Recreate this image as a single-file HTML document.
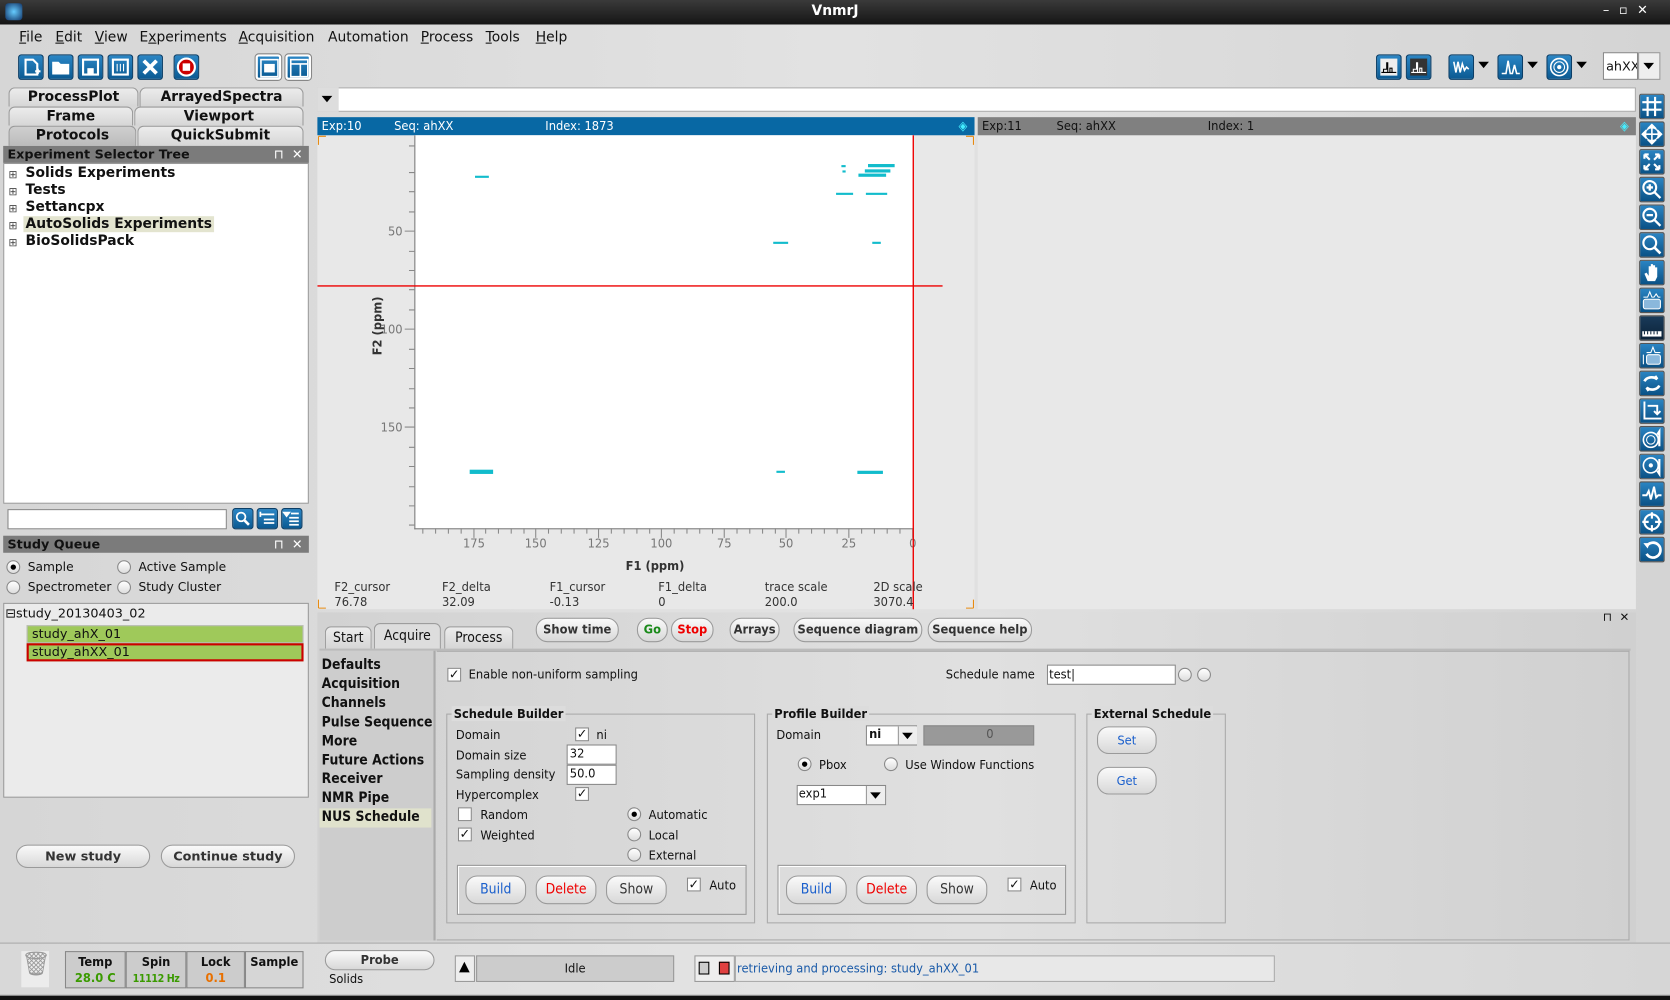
<!DOCTYPE html>
<html><head><meta charset="utf-8">
<style>
*{box-sizing:border-box;margin:0;padding:0}
html,body{width:1670px;height:1000px;overflow:hidden;background:#000}
#w{position:absolute;left:0;top:0;width:1568px;height:939px;transform:scale(1.06505);transform-origin:0 0;background:linear-gradient(90deg,#d6d6d6,#e2e2e2 50%,#d4d4d4);font-family:"DejaVu Sans","Liberation Sans",sans-serif;font-size:12px;color:#111;overflow:hidden}
.a{position:absolute;white-space:nowrap}
.c{font-family:"DejaVu Sans Condensed","DejaVu Sans","Liberation Sans",sans-serif}
.ib{position:absolute;width:24px;height:24px;border-radius:3px;background:linear-gradient(#2b86c5,#0b5a92);border:1px solid #0c3e66}
.ib svg{width:22px;height:22px;display:block}
.rb{position:absolute;width:24px;height:24px;border-radius:2px;background:linear-gradient(#2a84c2,#0a5185);border:1px solid #555}
.rb svg{width:22px;height:22px;display:block}
.tab{position:absolute;border:1px solid #9a9a9a;border-bottom:none;border-radius:6px 6px 0 0;background:linear-gradient(#ececec,#d6d6d6);font-weight:bold;font-size:13px;text-align:center;line-height:17px}
.hdr{position:absolute;background:#7b7b7b;color:#111;font-weight:bold;font-size:12px;padding-left:4px;line-height:16px}
.btn{position:absolute;border:1px solid #9a9a9a;border-radius:11px;background:linear-gradient(#fafafa,#d8d8d8);text-align:center;font-weight:bold;font-size:12px;color:#333;white-space:nowrap}
.rad{position:absolute;width:13px;height:13px;border-radius:50%;border:1px solid #888;background:linear-gradient(#fff,#ddd)}
.rad.on::after{content:"";position:absolute;left:3px;top:3px;width:5px;height:5px;border-radius:50%;background:#000}
.cb{position:absolute;width:13px;height:13px;border:1px solid #888;background:#fff;font-size:12px;line-height:11px;text-align:center;font-weight:bold}
.fld{position:absolute;background:#fff;border:1px solid #888;white-space:nowrap}
</style></head><body><div id="w">
<div class="a" style="left:0;top:0;width:1568px;height:23px;background:linear-gradient(#3a3a3a,#151515)"></div>
<div class="a" style="left:5px;top:3px;width:16px;height:16px;border-radius:3px;background:radial-gradient(#6cf,#136)"></div>
<div class="a" style="left:0;top:3px;width:1568px;text-align:center;color:#fff;font-weight:bold;font-size:13px">VnmrJ</div>
<div class="a" style="left:1505px;top:2px;color:#fff;font-size:12px;letter-spacing:9px">–▫✕</div>
<div class="a" style="left:18px;top:28px;font-size:13px">
<span class="a" style="left:0"><u>F</u>ile</span><span class="a" style="left:34px"><u>E</u>dit</span><span class="a" style="left:71px"><u>V</u>iew</span><span class="a" style="left:113px">E<u>x</u>periments</span><span class="a" style="left:206px"><u>A</u>cquisition</span><span class="a" style="left:290px">Automation</span><span class="a" style="left:377px"><u>P</u>rocess</span><span class="a" style="left:438px"><u>T</u>ools</span><span class="a" style="left:485px"><u>H</u>elp</span></div>
<div class="ib" style="left:17px;top:51px"><svg viewBox="0 0 22 22"><path d="M6 4h7l4 4v10H6z" fill="none" stroke="#fff" stroke-width="2"/><path d="M15 15h5M17.5 12.5v5" stroke="#fff" stroke-width="2"/></svg></div>
<div class="ib" style="left:45px;top:51px"><svg viewBox="0 0 22 22"><path d="M3 6h6l2 2h8v10H3z" fill="#fff"/></svg></div>
<div class="ib" style="left:73px;top:51px"><svg viewBox="0 0 22 22"><rect x="4" y="4" width="14" height="14" fill="none" stroke="#fff" stroke-width="2"/><rect x="8" y="12" width="6" height="6" fill="#fff"/></svg></div>
<div class="ib" style="left:101px;top:51px"><svg viewBox="0 0 22 22"><rect x="4" y="4" width="14" height="14" fill="none" stroke="#fff" stroke-width="2"/><path d="M8 8v7M11 8v7M14 8v7" stroke="#fff"/></svg></div>
<div class="ib" style="left:129px;top:51px"><svg viewBox="0 0 22 22"><path d="M5 5l12 12M17 5L5 17" stroke="#fff" stroke-width="3.5"/></svg></div>
<div class="ib" style="left:163px;top:51px"><svg viewBox="0 0 22 22"><circle cx="11" cy="11" r="8" fill="#c00" stroke="#fff" stroke-width="2"/><rect x="7.5" y="7.5" width="7" height="7" fill="#fff"/></svg></div>
<div class="ib" style="left:240px;top:51px;border:2px solid #fff;outline:1px solid #888"><svg viewBox="0 0 22 22"><rect x="3" y="3" width="16" height="16" fill="none" stroke="#fff" stroke-width="1.5"/><rect x="6" y="7" width="10" height="8" fill="#fff"/></svg></div>
<div class="ib" style="left:268px;top:51px;border:2px solid #fff;outline:1px solid #888"><svg viewBox="0 0 22 22"><rect x="3" y="3" width="16" height="16" fill="none" stroke="#fff" stroke-width="1.5"/><path d="M3 7h16M12 7v12" stroke="#fff" stroke-width="1.5"/></svg></div>
<div class="ib" style="left:1292px;top:51px"><svg viewBox="0 0 22 22"><rect x="3" y="3" width="16" height="16" fill="#eee"/><path d="M4 16h14M6 16v-3h3v-6h1v9M12 16v-4h2v4" stroke="#000" fill="none"/></svg></div>
<div class="ib" style="left:1320px;top:51px"><svg viewBox="0 0 22 22"><rect x="3" y="3" width="16" height="16" fill="#333"/><path d="M4 16h14M6 16v-3h3v-6h1v9M12 16v-4h2v4" stroke="#fff" fill="none"/></svg></div>
<div class="ib" style="left:1360px;top:51px"><svg viewBox="0 0 22 22"><path d="M4 6l2 10 2-10 2 10 2-8 2 6 2-3 2 2" stroke="#fff" stroke-width="1.5" fill="none"/></svg></div>
<div class="a" style="left:1388px;top:58px;border:5px solid transparent;border-top:6px solid #000"></div>
<div class="ib" style="left:1406px;top:51px"><svg viewBox="0 0 22 22"><path d="M3 17h4l2-12 2 12h2l2-8 2 8h3" stroke="#fff" stroke-width="1.5" fill="none"/></svg></div>
<div class="a" style="left:1434px;top:58px;border:5px solid transparent;border-top:6px solid #000"></div>
<div class="ib" style="left:1452px;top:51px"><svg viewBox="0 0 22 22"><circle cx="11" cy="11" r="8" fill="none" stroke="#fff" stroke-width="1.5"/><circle cx="11" cy="11" r="5" fill="none" stroke="#fff"/><circle cx="11" cy="11" r="2" fill="#fff"/></svg></div>
<div class="a" style="left:1480px;top:58px;border:5px solid transparent;border-top:6px solid #000"></div>
<div class="fld" style="left:1505px;top:49px;width:33px;height:26px;font-size:12px;line-height:24px;padding-left:2px;overflow:hidden">ahXX</div>
<div class="a" style="left:1538px;top:49px;width:21px;height:26px;border:1px solid #999;background:#eee"></div>
<div class="a" style="left:1543px;top:59px;border:5px solid transparent;border-top:6px solid #000"></div>
<div class="tab" style="left:8px;top:82px;width:122px;height:18px">ProcessPlot</div>
<div class="tab" style="left:131px;top:82px;width:154px;height:18px">ArrayedSpectra</div>
<div class="tab" style="left:8px;top:100px;width:117px;height:18px">Frame</div>
<div class="tab" style="left:126px;top:100px;width:159px;height:18px">Viewport</div>
<div class="tab" style="left:8px;top:118px;width:120px;height:19px;background:linear-gradient(#cfcfcf,#bbb)">Protocols</div>
<div class="tab" style="left:129px;top:118px;width:156px;height:19px">QuickSubmit</div>
<div class="hdr" style="left:3px;top:137px;width:287px;height:16px">Experiment Selector Tree<span class="a" style="left:254px;color:#fff;font-weight:normal">⊓&nbsp; ✕</span></div>
<div class="a" style="left:3px;top:153px;width:287px;height:320px;background:#fff;border:1px solid #999;font-size:13px;font-weight:bold;line-height:16px;padding:1px 0 0 20px">
<div>Solids Experiments</div><div>Tests</div><div>Settancpx</div><div><span style="background:#e3e4cf;padding:0 2px;margin-left:-2px">AutoSolids Experiments</span></div><div>BioSolidsPack</div></div>
<div class="a" style="left:8px;top:157px;font-size:10px;line-height:16px;color:#444">⊞<br>⊞<br>⊞<br>⊞<br>⊞</div>
<div class="fld" style="left:7px;top:478px;width:206px;height:19px"></div>
<div class="ib" style="left:218px;top:477px;width:20px;height:20px"><svg viewBox="0 0 22 22" style="width:18px;height:18px"><circle cx="9" cy="9" r="5" fill="none" stroke="#fff" stroke-width="2"/><path d="M13 13l5 5" stroke="#fff" stroke-width="3"/></svg></div>
<div class="ib" style="left:241px;top:477px;width:20px;height:20px"><svg viewBox="0 0 22 22" style="width:18px;height:18px"><path d="M3 6h16M3 3v6M7 12h12M7 16h12" stroke="#fff" stroke-width="2"/></svg></div>
<div class="ib" style="left:264px;top:477px;width:20px;height:20px"><svg viewBox="0 0 22 22" style="width:18px;height:18px"><path d="M2 4h6l-3 4zM10 5h9M8 10h11M8 14h11M8 18h11" stroke="#fff" fill="#fff" stroke-width="2"/></svg></div>
<div class="hdr" style="left:3px;top:503px;width:287px;height:16px">Study Queue<span class="a" style="left:254px;color:#fff;font-weight:normal">⊓&nbsp; ✕</span></div>
<div style="font-size:11.5px">
<div class="rad on" style="left:6px;top:526px"></div><div class="a" style="left:26px;top:525px">Sample</div>
<div class="rad" style="left:110px;top:526px"></div><div class="a" style="left:130px;top:525px">Active Sample</div>
<div class="rad" style="left:6px;top:545px"></div><div class="a" style="left:26px;top:544px">Spectrometer</div>
<div class="rad" style="left:110px;top:545px"></div><div class="a" style="left:130px;top:544px">Study Cluster</div>
</div>
<div class="a" style="left:3px;top:566px;width:287px;height:183px;background:#ebebeb;border:1px solid #999"></div>
<div class="a" style="left:5px;top:569px;font-size:12px">⊟study_20130403_02</div>
<div class="a" style="left:25px;top:587px;width:260px;height:17px;background:#9fc95a;border:1px solid #bbb;padding-left:4px;line-height:15px">study_ahX_01</div>
<div class="a" style="left:25px;top:604px;width:260px;height:17px;background:#9fc95a;border:2px solid #c00;padding-left:3px;line-height:13px">study_ahXX_01</div>
<div class="btn" style="left:15px;top:793px;width:126px;height:22px;line-height:20px">New study</div>
<div class="btn" style="left:151px;top:793px;width:126px;height:22px;line-height:20px">Continue study</div>
<div class="a" style="left:298px;top:82px;width:1238px;height:23px;background:#fff;border:1px solid #aaa"></div>
<div class="a" style="left:298px;top:82px;width:20px;height:23px;background:#ddd"></div>
<div class="a" style="left:302px;top:90px;border:5px solid transparent;border-top:6px solid #000"></div>
<div class="a" style="left:298px;top:110px;width:617px;height:462px;background:#e8e8e8"></div>
<div class="a" style="left:918px;top:110px;width:618px;height:462px;background:#e8e8e8"></div>
<div class="a c" style="left:298px;top:110px;width:617px;height:17px;background:#0868a4;color:#fff;line-height:17px;font-size:12px"><span class="a" style="left:4px">Exp:10</span><span class="a" style="left:72px">Seq: ahXX</span><span class="a" style="left:214px">Index: 1873</span><span class="a" style="left:602px;color:#4ef">◈</span></div>
<div class="a c" style="left:918px;top:110px;width:618px;height:17px;background:#808080;color:#111;line-height:17px;font-size:12px"><span class="a" style="left:4px">Exp:11</span><span class="a" style="left:74px">Seq: ahXX</span><span class="a" style="left:216px">Index: 1</span><span class="a" style="left:603px;color:#4ef">◈</span></div>
<div class="a" style="left:389px;top:127px;width:469px;height:370px;background:#fff;border-left:1px solid #777;border-bottom:1px solid #777"></div>
<svg class="a" style="left:298px;top:110px" width="620" height="465" viewBox="298 110 620 465">
<g stroke="#888" stroke-width="1">
<path d="M384 137h5M384 162h5M384 180h5M384 199h5M380 217h9M384 236h5M384 254h5M384 272h5M384 291h5M380 309h9M384 328h5M384 346h5M384 365h5M384 383h5M380 401h9M384 420h5M384 438h5M384 457h5M384 475h5M384 493h5"/>
<path d="M397 496v5M409 496v5M421 496v5M433 496v5M445 496v9M456 496v5M468 496v5M480 496v5M492 496v5M503 496v9M515 496v5M527 496v5M539 496v5M551 496v5M562 496v9M574 496v5M586 496v5M598 496v5M610 496v5M621 496v9M633 496v5M645 496v5M657 496v5M669 496v5M680 496v9M692 496v5M704 496v5M716 496v5M728 496v5M738 496v9M750 496v5M762 496v5M774 496v5M786 496v5M797 496v9M809 496v5M821 496v5M833 496v5M845 496v5M857 496v9"/>
</g>
<g fill="#777" font-family="DejaVu Sans Condensed,DejaVu Sans,sans-serif" font-size="12">
<text x="378" y="221" text-anchor="end">50</text><text x="378" y="313" text-anchor="end">100</text><text x="378" y="405" text-anchor="end">150</text>
<text x="445" y="514" text-anchor="middle">175</text><text x="503" y="514" text-anchor="middle">150</text><text x="562" y="514" text-anchor="middle">125</text><text x="621" y="514" text-anchor="middle">100</text><text x="680" y="514" text-anchor="middle">75</text><text x="738" y="514" text-anchor="middle">50</text><text x="797" y="514" text-anchor="middle">25</text><text x="857" y="514" text-anchor="middle">0</text>
</g>
<text x="615" y="535" text-anchor="middle" font-size="12" font-weight="bold" fill="#333" font-family="DejaVu Sans Condensed,DejaVu Sans,sans-serif">F1 (ppm)</text>
<text x="358" y="306" text-anchor="middle" font-size="12" font-weight="bold" fill="#333" transform="rotate(-90 358 306)" font-family="DejaVu Sans Condensed,DejaVu Sans,sans-serif">F2 (ppm)</text>
<g fill="#12bccc">
<rect x="446" y="165" width="13" height="2"/><rect x="815" y="154" width="25" height="3"/><rect x="812" y="159" width="24" height="3"/><rect x="806" y="163" width="26" height="3"/><rect x="790" y="155" width="4" height="2"/><rect x="791" y="160" width="3" height="2"/><rect x="785" y="181" width="16" height="2"/><rect x="813" y="181" width="20" height="2"/><rect x="726" y="227" width="14" height="2"/><rect x="819" y="227" width="8" height="2"/><rect x="441" y="441" width="22" height="4"/><rect x="729" y="442" width="8" height="2"/><rect x="805" y="442" width="24" height="3"/>
</g>
<path d="M298 268.5h587M857.5 127v445" stroke="#e00" stroke-width="1.3"/>
<path d="M299 128v8M299 128h7M914 128v8M914 128h-7M299 571v-8M299 571h7M914 571v-8M914 571h-7" stroke="#e78a10" fill="none"/>
<path d="M919 128v8M919 128h7M919 571v-8M919 571h7" stroke="#e78a10" fill="none"/>
<g fill="#333" font-family="DejaVu Sans Condensed,DejaVu Sans,sans-serif" font-size="12"><text x="314" y="555">F2_cursor</text><text x="415" y="555">F2_delta</text><text x="516" y="555">F1_cursor</text><text x="618" y="555">F1_delta</text><text x="718" y="555">trace scale</text><text x="820" y="555">2D scale</text>
<text x="314" y="569">76.78</text><text x="415" y="569">32.09</text><text x="516" y="569">-0.13</text><text x="618" y="569">0</text><text x="718" y="569">200.0</text><text x="820" y="569">3070.4</text></g>
</svg>
<div class="rb" style="left:1539px;top:88px"><svg viewBox="0 0 22 22"><path d="M2 7h18M2 14h18M7 2v18M14 2v18" stroke="#fff" stroke-width="2"/></svg></div>
<div class="rb" style="left:1539px;top:114px"><svg viewBox="0 0 22 22"><circle cx="11" cy="11" r="6" fill="none" stroke="#fff"/><path d="M11 2v18M2 11h18M11 2l-3 3h6zM11 20l-3-3h6zM2 11l3-3v6zM20 11l-3-3v6z" stroke="#fff" fill="#fff" stroke-width="1.5"/></svg></div>
<div class="rb" style="left:1539px;top:140px"><svg viewBox="0 0 22 22"><path d="M4 4l5 5M18 4l-5 5M4 18l5-5M18 18l-5-5M4 4h4M4 4v4M18 4h-4M18 4v4M4 18h4M4 18v-4M18 18h-4M18 18v-4" stroke="#fff" stroke-width="2"/></svg></div>
<div class="rb" style="left:1539px;top:166px"><svg viewBox="0 0 22 22"><circle cx="9" cy="9" r="6" fill="none" stroke="#fff" stroke-width="2"/><path d="M13 13l6 6M6 9h6M9 6v6" stroke="#fff" stroke-width="2.2"/></svg></div>
<div class="rb" style="left:1539px;top:192px"><svg viewBox="0 0 22 22"><circle cx="9" cy="9" r="6" fill="none" stroke="#fff" stroke-width="2"/><path d="M13 13l6 6M6 9h6" stroke="#fff" stroke-width="2.2"/></svg></div>
<div class="rb" style="left:1539px;top:218px"><svg viewBox="0 0 22 22"><circle cx="9" cy="9" r="6" fill="none" stroke="#fff" stroke-width="2"/><path d="M13 13l6 6" stroke="#fff" stroke-width="2.5"/></svg></div>
<div class="rb" style="left:1539px;top:244px"><svg viewBox="0 0 22 22"><path d="M7 19l-3-7 2-1 2 3V5h2v6V3h2v8V4h2v7V6h2v9l-2 4z" fill="#fff"/></svg></div>
<div class="rb" style="left:1539px;top:270px"><svg viewBox="0 0 22 22"><rect x="3" y="10" width="16" height="9" rx="2" fill="#8ab8dc" stroke="#fff"/><path d="M3 8h4l2-5 2 5h2l2-3 2 3h2" stroke="#fff" fill="none"/></svg></div>
<div class="rb" style="left:1539px;top:296px;background:linear-gradient(#1a3b5a,#0b2238)"><svg viewBox="0 0 22 22"><rect x="2" y="14" width="18" height="5" fill="#fff"/><path d="M4 14v3M7 14v3M10 14v3M13 14v3M16 14v3" stroke="#0b2238"/></svg></div>
<div class="rb" style="left:1539px;top:322px"><svg viewBox="0 0 22 22"><rect x="6" y="10" width="13" height="9" rx="2" fill="#8ab8dc" stroke="#fff"/><path d="M3 10v9M6 8h4l2-5 2 5h5" stroke="#fff" fill="none"/></svg></div>
<div class="rb" style="left:1539px;top:348px"><svg viewBox="0 0 22 22"><path d="M4 9c2-4 8-5 12-2l-2-3M18 13c-2 4-8 5-12 2l2 3" stroke="#fff" stroke-width="2.5" fill="none"/></svg></div>
<div class="rb" style="left:1539px;top:374px"><svg viewBox="0 0 22 22"><path d="M4 2v16h16M7 6h9v8M13 11l3 3 3-3" stroke="#fff" stroke-width="1.8" fill="none"/></svg></div>
<div class="rb" style="left:1539px;top:400px"><svg viewBox="0 0 22 22"><circle cx="10" cy="12" r="7" fill="none" stroke="#fff" stroke-width="1.5"/><circle cx="10" cy="12" r="4" fill="none" stroke="#fff"/><path d="M18 18V4l-2 3" stroke="#fff" stroke-width="2" fill="none"/></svg></div>
<div class="rb" style="left:1539px;top:426px"><svg viewBox="0 0 22 22"><circle cx="10" cy="10" r="7" fill="none" stroke="#fff" stroke-width="1.5"/><circle cx="10" cy="10" r="2" fill="#fff"/><path d="M18 4v14l-2-3" stroke="#fff" stroke-width="2" fill="none"/></svg></div>
<div class="rb" style="left:1539px;top:452px"><svg viewBox="0 0 22 22"><path d="M2 12h4l2-4 2 8 3-12 2 10 2-2h3" stroke="#fff" stroke-width="1.8" fill="none"/></svg></div>
<div class="rb" style="left:1539px;top:478px"><svg viewBox="0 0 22 22"><circle cx="11" cy="11" r="7" fill="none" stroke="#fff" stroke-width="2"/><path d="M11 2v6M11 14v6M2 11h6M14 11h6" stroke="#fff" stroke-width="2"/></svg></div>
<div class="rb" style="left:1539px;top:504px"><svg viewBox="0 0 22 22"><path d="M6 8a7 7 0 1 1 0 7" stroke="#fff" stroke-width="2.5" fill="none"/><path d="M3 5l4 5 2-5z" fill="#fff"/></svg></div>
<div class="a" style="left:298px;top:575px;width:1238px;height:310px;background:linear-gradient(90deg,#d2d2d2,#e0e0e0 50%,#d0d0d0)"></div>
<div class="a" style="left:1505px;top:573px;font-size:11px">⊓&nbsp;&nbsp;✕</div>
<div class="tab c" style="left:305px;top:588px;width:44px;height:21px;font-weight:normal;line-height:21px">Start</div>
<div class="tab c" style="left:351px;top:585px;width:63px;height:24px;font-weight:normal;line-height:24px;background:#ddd">Acquire</div>
<div class="tab c" style="left:417px;top:588px;width:65px;height:21px;font-weight:normal;line-height:21px">Process</div>
<div class="btn c" style="left:503px;top:580px;width:78px;height:23px;line-height:21px">Show time</div>
<div class="btn c" style="left:598px;top:580px;width:29px;height:23px;line-height:21px;color:#1a8a1a">Go</div>
<div class="btn c" style="left:630px;top:580px;width:40px;height:23px;line-height:21px;color:#e00">Stop</div>
<div class="btn c" style="left:685px;top:580px;width:47px;height:23px;line-height:21px">Arrays</div>
<div class="btn c" style="left:745px;top:580px;width:121px;height:23px;line-height:21px">Sequence diagram</div>
<div class="btn c" style="left:871px;top:580px;width:98px;height:23px;line-height:21px">Sequence help</div>
<div class="a" style="left:300px;top:609px;width:1231px;height:2px;background:#bbb"></div>
<div class="a" style="left:300px;top:611px;width:109px;height:272px;background:#cdcdcd;border-right:2px solid #aaa"></div>
<div class="a c" style="left:302px;top:616px;font-size:13px;font-weight:bold;line-height:17.9px">Defaults<br>Acquisition<br>Channels<br>Pulse Sequence<br>More<br>Future Actions<br>Receiver<br>NMR Pipe<br><span style="background:#e0e2cc;display:inline-block;width:105px;margin-left:-2px;padding-left:2px">NUS Schedule</span></div>
<div class="a" style="left:410px;top:611px;width:1120px;height:272px;border:1px solid #aaa;border-left:none"></div>
<div class="cb" style="left:420px;top:627px">✓</div><div class="a c" style="left:440px;top:626px">Enable non-uniform sampling</div>
<div class="a c" style="left:888px;top:626px">Schedule name</div>
<div class="fld c" style="left:983px;top:624px;width:121px;height:19px;padding-left:1px;line-height:17px">test|</div>
<div class="rad" style="left:1106px;top:627px"></div><div class="rad" style="left:1124px;top:627px"></div>
<div class="a" style="left:419px;top:670px;width:290px;height:197px;border:1px solid #aaa"></div>
<div class="a c" style="left:424px;top:663px;background:#dcdcdc;padding:0 2px;font-weight:bold">Schedule Builder</div>
<div class="a c" style="left:428px;top:683px">Domain</div><div class="cb" style="left:540px;top:683px">✓</div><div class="a c" style="left:560px;top:683px">ni</div>
<div class="a c" style="left:428px;top:702px">Domain size</div><div class="fld c" style="left:532px;top:699px;width:47px;height:19px;padding-left:2px">32</div>
<div class="a c" style="left:428px;top:720px">Sampling density</div><div class="fld c" style="left:532px;top:718px;width:47px;height:19px;padding-left:2px">50.0</div>
<div class="a c" style="left:428px;top:739px">Hypercomplex</div><div class="cb" style="left:540px;top:739px">✓</div>
<div class="cb" style="left:430px;top:758px"></div><div class="a c" style="left:451px;top:758px">Random</div>
<div class="cb" style="left:430px;top:777px">✓</div><div class="a c" style="left:451px;top:777px">Weighted</div>
<div class="rad on" style="left:589px;top:758px"></div><div class="a c" style="left:609px;top:758px">Automatic</div>
<div class="rad" style="left:589px;top:777px"></div><div class="a c" style="left:609px;top:777px">Local</div>
<div class="rad" style="left:589px;top:796px"></div><div class="a c" style="left:609px;top:796px">External</div>
<div class="a" style="left:429px;top:812px;width:272px;height:47px;border:1px solid #999;box-shadow:inset 1px 1px #fff"></div>
<div class="btn c" style="left:437px;top:822px;width:57px;height:27px;line-height:25px;font-weight:normal;color:#1a5fcc;font-size:13px">Build</div>
<div class="btn c" style="left:503px;top:822px;width:57px;height:27px;line-height:25px;font-weight:normal;color:#e00;font-size:13px">Delete</div>
<div class="btn c" style="left:569px;top:822px;width:57px;height:27px;line-height:25px;font-weight:normal;font-size:13px">Show</div>
<div class="cb" style="left:645px;top:824px">✓</div><div class="a c" style="left:666px;top:824px">Auto</div>
<div class="a" style="left:720px;top:670px;width:290px;height:197px;border:1px solid #aaa"></div>
<div class="a c" style="left:725px;top:663px;background:#dcdcdc;padding:0 2px;font-weight:bold">Profile Builder</div>
<div class="a c" style="left:729px;top:683px">Domain</div>
<div class="fld c" style="left:813px;top:681px;width:48px;height:19px;padding-left:2px;font-weight:bold">ni</div>
<div class="a" style="left:843px;top:682px;width:18px;height:17px;background:#eee;border-left:1px solid #999"></div>
<div class="a" style="left:847px;top:688px;border:5px solid transparent;border-top:6px solid #000"></div>
<div class="a c" style="left:867px;top:681px;width:104px;height:19px;background:#999;border:1px solid #888;color:#555;padding-left:58px">0</div>
<div class="rad on" style="left:749px;top:711px"></div><div class="a c" style="left:769px;top:711px">Pbox</div>
<div class="rad" style="left:830px;top:711px"></div><div class="a c" style="left:850px;top:711px">Use Window Functions</div>
<div class="fld c" style="left:748px;top:737px;width:84px;height:19px;padding-left:1px">exp1</div>
<div class="a" style="left:813px;top:738px;width:18px;height:17px;background:#eee;border-left:1px solid #999"></div>
<div class="a" style="left:817px;top:744px;border:5px solid transparent;border-top:6px solid #000"></div>
<div class="a" style="left:730px;top:812px;width:271px;height:47px;border:1px solid #999;box-shadow:inset 1px 1px #fff"></div>
<div class="btn c" style="left:738px;top:822px;width:57px;height:27px;line-height:25px;font-weight:normal;color:#1a5fcc;font-size:13px">Build</div>
<div class="btn c" style="left:804px;top:822px;width:57px;height:27px;line-height:25px;font-weight:normal;color:#e00;font-size:13px">Delete</div>
<div class="btn c" style="left:870px;top:822px;width:57px;height:27px;line-height:25px;font-weight:normal;font-size:13px">Show</div>
<div class="cb" style="left:946px;top:824px">✓</div><div class="a c" style="left:967px;top:824px">Auto</div>
<div class="a" style="left:1020px;top:670px;width:131px;height:197px;border:1px solid #aaa"></div>
<div class="a c" style="left:1025px;top:663px;background:#dcdcdc;padding:0 2px;font-weight:bold">External Schedule</div>
<div class="btn c" style="left:1030px;top:682px;width:56px;height:26px;line-height:24px;font-weight:normal;color:#1a5fcc">Set</div>
<div class="btn c" style="left:1030px;top:720px;width:56px;height:26px;line-height:24px;font-weight:normal;color:#1a5fcc">Get</div>
<div class="a" style="left:0;top:885px;width:1568px;height:50px;background:linear-gradient(90deg,#d8d8d8,#e4e4e4 50%,#d6d6d6);border-top:1px solid #aaa;border-bottom:1px solid #999"></div>
<div class="a" style="left:0;top:935px;width:1568px;height:4px;background:#111"></div>
<div class="a" style="left:20px;top:893px;width:26px;height:34px;color:#999;font-size:22px;text-align:center;background:#ececec">🗑</div>
<div class="a c" style="left:61px;top:893px;width:57px;height:35px;border:1px solid #888;background:#ccc;text-align:center;font-weight:bold;line-height:15px;padding-top:2px">Temp<br><span style="color:#3a9a00">28.0 C</span></div>
<div class="a c" style="left:118px;top:893px;width:57px;height:35px;border:1px solid #888;background:#ccc;text-align:center;font-weight:bold;line-height:15px;padding-top:2px;overflow:hidden">Spin<br><span style="color:#3a9a00;font-size:10px;letter-spacing:-0.4px">11112 Hz</span></div>
<div class="a c" style="left:175px;top:893px;width:55px;height:35px;border:1px solid #888;background:#ccc;text-align:center;font-weight:bold;line-height:15px;padding-top:2px">Lock<br><span style="color:#e87000">0.1</span></div>
<div class="a c" style="left:230px;top:893px;width:55px;height:35px;border:1px solid #888;background:#d6d6d6;text-align:center;font-weight:bold;line-height:15px;padding-top:2px">Sample</div>
<div class="btn c" style="left:305px;top:892px;width:103px;height:19px;line-height:17px">Probe</div>
<div class="a c" style="left:309px;top:912px">Solids</div>
<div class="a" style="left:427px;top:897px;width:19px;height:25px;background:#eee;border:1px solid #999"></div>
<div class="a" style="left:431px;top:903px;border:5px solid transparent;border-bottom:10px solid #000;border-top:none"></div>
<div class="a c" style="left:447px;top:897px;width:186px;height:25px;background:#ccc;border:1px solid #999;text-align:center;line-height:23px">Idle</div>
<div class="a" style="left:652px;top:897px;width:38px;height:25px;background:#eee;border:1px solid #999"></div>
<div class="a" style="left:656px;top:903px;width:10px;height:12px;border:1px solid #000;background:#ccc"></div>
<div class="a" style="left:675px;top:903px;width:10px;height:12px;border:1px solid #000;background:#e04040"></div>
<div class="a c" style="left:690px;top:897px;width:507px;height:25px;background:#e8e8e8;border:1px solid #aaa;color:#1a5aa8;line-height:23px;padding-left:1px">retrieving and processing: study_ahXX_01</div>
</div></body></html>
